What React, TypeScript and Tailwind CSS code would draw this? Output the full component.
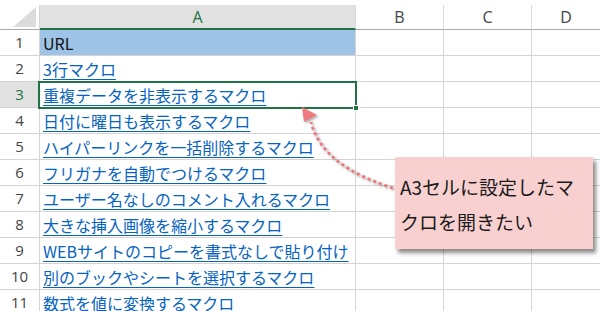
const rows = [
  "URL",
  "3行マクロ",
  "重複データを非表示するマクロ",
  "日付に曜日も表示するマクロ",
  "ハイパーリンクを一括削除するマクロ",
  "フリガナを自動でつけるマクロ",
  "ユーザー名なしのコメント入れるマクロ",
  "大きな挿入画像を縮小するマクロ",
  "WEBサイトのコピーを書式なしで貼り付け",
  "別のブックやシートを選択するマクロ",
  "数式を値に変換するマクロ",
];

const cjk = "font-['Noto_Sans_CJK_JP','Noto_Sans',sans-serif]";
const ui = "font-['Open_Sans','Noto_Sans',sans-serif]";

function ColumnHeader({ label, active }: { label: string; active?: boolean }) {
  return (
    <div
      className={`flex h-[25px] items-center justify-center border-r border-[#dadada] text-[16px] ${ui} ${
        active
          ? "border-b-2 border-b-[#217346] bg-[#e1e1e1] text-[#217346]"
          : "border-b border-b-[#a8a8a8] bg-white text-[#444]"
      }`}
    >
      {label}
    </div>
  );
}

function Row({ n, text }: { n: number; text: string }) {
  const selected = n === 3;
  const header = n === 1;
  return (
    <>
      <div
        className={`flex h-[26px] items-center justify-center border-r border-b border-[#d4d4d4] text-[15px] ${ui} ${
          selected ? "bg-[#e1e1e1] text-[#217346]" : "bg-white text-[#444]"
        }`}
      >
        {n}
      </div>
      <div
        className={`flex h-[26px] items-center overflow-visible whitespace-nowrap border-r border-b border-[#d4d4d4] pl-[3px] text-[16px] leading-none ${cjk} ${
          header ? "bg-[#9dc3e6] text-[#111]" : "bg-white text-[#0563c1] underline underline-offset-[3px]"
        }`}
      >
        {text}
      </div>
      <div className="h-[26px] border-r border-b border-[#d4d4d4]" />
      <div className="h-[26px] border-r border-b border-[#d4d4d4]" />
      <div className="h-[26px] border-b border-[#d4d4d4]" />
    </>
  );
}

export default function App() {
  return (
    <div className="relative h-[311px] w-[600px] overflow-hidden bg-white pt-[5px]">
      <div className="grid grid-cols-[40px_316px_88px_88px_1fr]">
        {/* corner cell with the select-all triangle */}
        <div className="relative h-[25px] border-r border-b border-[#d4d4d4] border-b-[#a8a8a8] bg-white">
          <svg className="absolute inset-0" width="39" height="24">
            <polygon points="13,22 36,22 36,2" fill="#dcdcdc" />
          </svg>
        </div>
        <ColumnHeader label="A" active />
        <ColumnHeader label="B" />
        <ColumnHeader label="C" />
        <div className={`flex h-[25px] items-center justify-center border-b border-[#a8a8a8] text-[16px] text-[#444] ${ui}`}>
          D
        </div>
        {rows.map((t, i) => (
          <Row key={i} n={i + 1} text={t} />
        ))}
      </div>

      {/* active cell A3 */}
      <div className="pointer-events-none absolute left-[38px] top-[81px] h-[28px] w-[319px] border-2 border-[#217346]" />
      <div className="pointer-events-none absolute left-[353px] top-[105px] h-[6px] w-[6px] border border-white bg-[#217346]" />

      {/* dotted arrow from the note to A3 */}
      <svg className="pointer-events-none absolute inset-0" width="600" height="311">
        <defs>
          <filter id="sh" x="-20%" y="-20%" width="140%" height="140%">
            <feDropShadow dx="1.5" dy="1.5" stdDeviation="0.8" floodColor="#000" floodOpacity="0.35" />
          </filter>
        </defs>
        <g filter="url(#sh)">
          <path
            d="M393 188 Q322 166 311 122"
            fill="none"
            stroke="#e8787d"
            strokeWidth="3"
            strokeDasharray="3 3"
          />
          <polygon points="302,107 304,122 317,115" fill="#ec7b80" />
        </g>
      </svg>

      {/* note */}
      <div
        className={`absolute left-[395px] top-[157px] h-[92px] w-[198px] bg-[#f8d0d0] pl-[5px] pt-[12px] text-[19px] leading-[35px] text-[#1a1a1a] shadow-[3px_4px_4px_rgba(0,0,0,0.45)] ${cjk}`}
      >
        <div className="whitespace-nowrap">A3セルに設定したマ</div>
        <div className="whitespace-nowrap">クロを開きたい</div>
      </div>
    </div>
  );
}
